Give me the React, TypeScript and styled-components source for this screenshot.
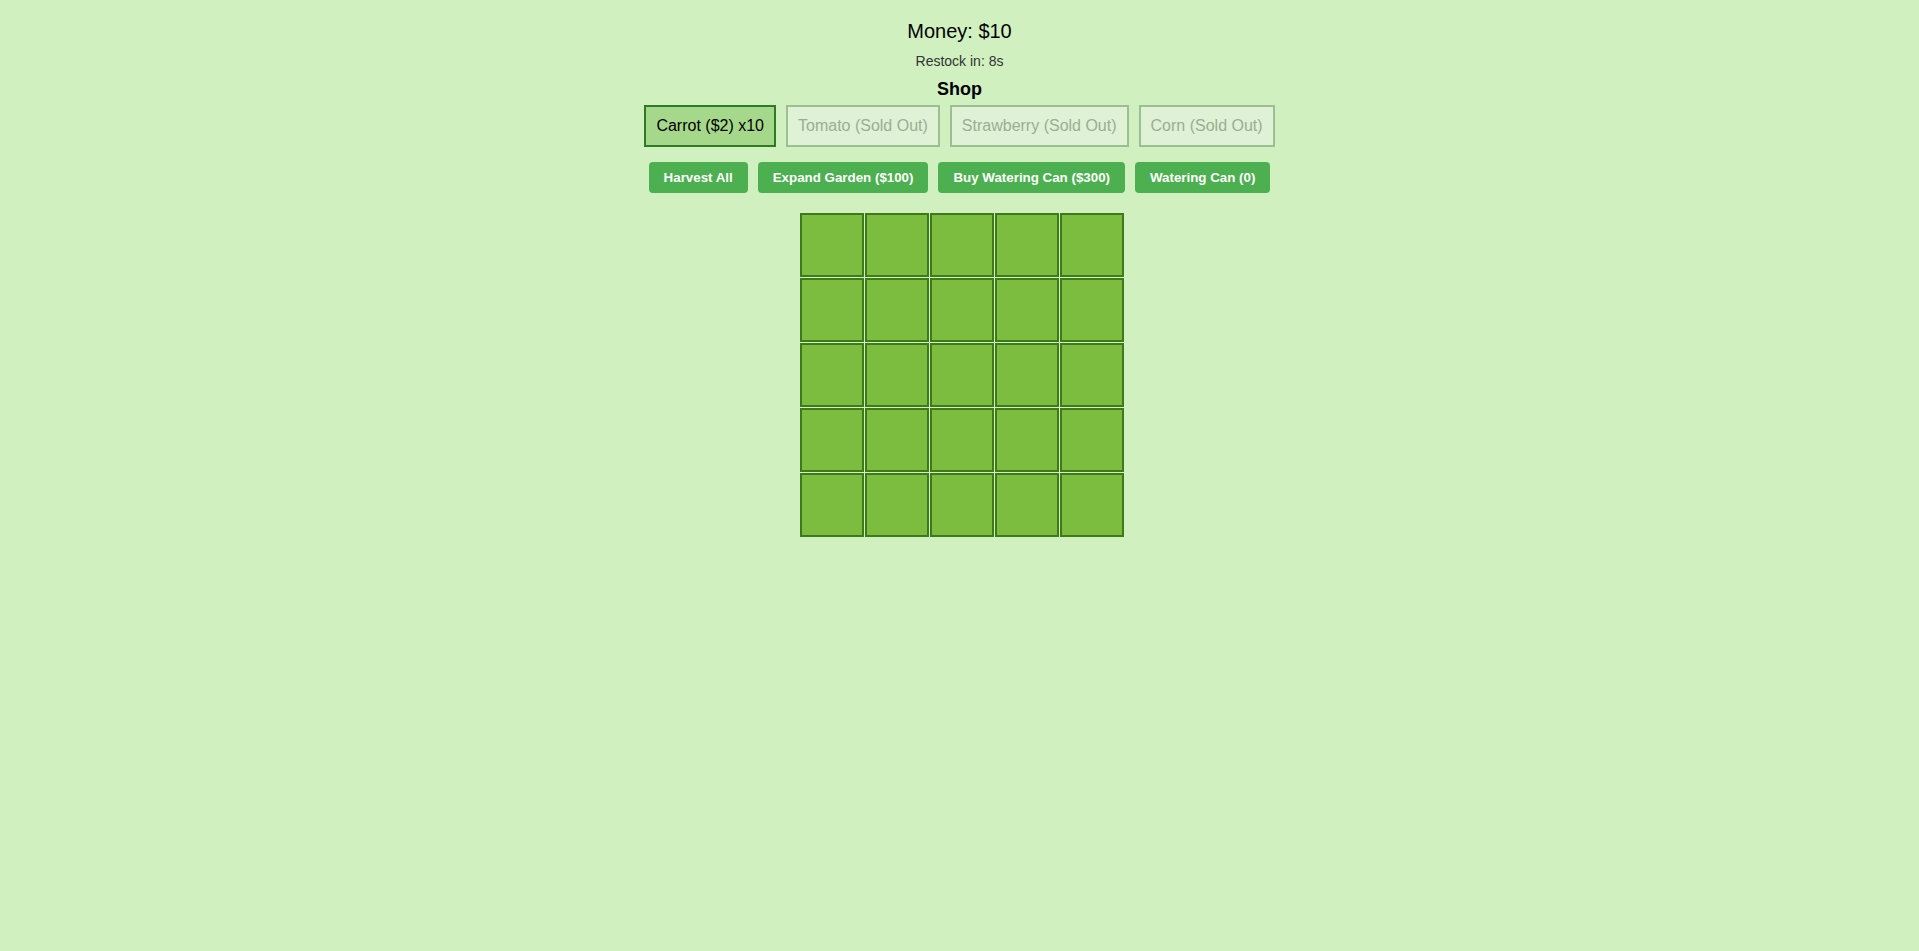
import styled, { createGlobalStyle } from 'styled-components';

const GlobalStyle = createGlobalStyle`
  html, body {
    margin: 0;
    padding: 0;
    background: #d0f0c0;
    font-family: "Liberation Sans", Arial, sans-serif;
  }
`;

interface Seed {
  name: string;
  price: number;
  stock: number;
}

const seeds: Seed[] = [
  { name: 'Carrot', price: 2, stock: 10 },
  { name: 'Tomato', price: 5, stock: 0 },
  { name: 'Strawberry', price: 10, stock: 0 },
  { name: 'Corn', price: 20, stock: 0 },
];

const actions = ['Harvest All', 'Expand Garden ($100)', 'Buy Watering Can ($300)', 'Watering Can (0)'];

const App: React.FC = () => {
  const plots = Array.from({ length: 25 });
  return (
    <Page>
      <GlobalStyle />
      <Money>Money: $10</Money>
      <Restock>Restock in: 8s</Restock>
      <ShopTitle>Shop</ShopTitle>
      <ShopRow>
        {seeds.map((s, i) => (
          <SeedButton key={s.name} $selected={i === 0} $soldOut={s.stock === 0}>
            {s.stock === 0 ? `${s.name} (Sold Out)` : `${s.name} ($${s.price}) x${s.stock}`}
          </SeedButton>
        ))}
      </ShopRow>
      <ActionRow>
        {actions.map((a) => (
          <ActionButton key={a}>{a}</ActionButton>
        ))}
      </ActionRow>
      <Garden>
        {plots.map((_, i) => (
          <Plot key={i} />
        ))}
      </Garden>
    </Page>
  );
};

export default App;

const Page = styled.div`
  display: flex;
  flex-direction: column;
  align-items: center;
  padding-top: 20px;
  min-height: 100vh;
  box-sizing: border-box;
`;

const Money = styled.div`
  font-size: 20px;
  line-height: 23px;
  color: #000;
`;

const Restock = styled.div`
  margin-top: 10px;
  font-size: 14px;
  line-height: 16px;
  color: #333;
`;

const ShopTitle = styled.div`
  margin-top: 10px;
  font-size: 18px;
  line-height: 21px;
  font-weight: bold;
  color: #000;
`;

const ShopRow = styled.div`
  margin-top: 5px;
  display: flex;
  gap: 10px;
`;

const SeedButton = styled.button<{ $selected: boolean; $soldOut: boolean }>`
  font-family: inherit;
  font-size: 16px;
  line-height: 18px;
  padding: 10px 10px;
  border: 2px solid ${({ $selected, $soldOut }) => ($selected ? '#2f7a26' : $soldOut ? '#9dbd92' : '#4caf50')};
  background: ${({ $selected, $soldOut }) => ($selected ? '#a6d88b' : $soldOut ? '#dff2d5' : '#e8f5e0')};
  color: ${({ $soldOut }) => ($soldOut ? '#9aae93' : '#000')};
  border-radius: 0;
  cursor: ${({ $soldOut }) => ($soldOut ? 'default' : 'pointer')};
`;

const ActionRow = styled.div`
  margin-top: 15px;
  display: flex;
  gap: 10px;
`;

const ActionButton = styled.button`
  font-family: inherit;
  font-size: 13.333px;
  line-height: 15px;
  font-weight: bold;
  color: #fff;
  background: #4caf50;
  border: none;
  border-radius: 4px;
  padding: 8px 15px;
  cursor: pointer;
`;

const Garden = styled.div`
  margin-top: 20px;
  padding-left: 5px;
  display: grid;
  grid-template-columns: repeat(5, 64px);
  grid-auto-rows: 64px;
  gap: 1px;
`;

const Plot = styled.div`
  box-sizing: border-box;
  border: 2px solid #3f7a1a;
  background: #7cbd40;
`;
